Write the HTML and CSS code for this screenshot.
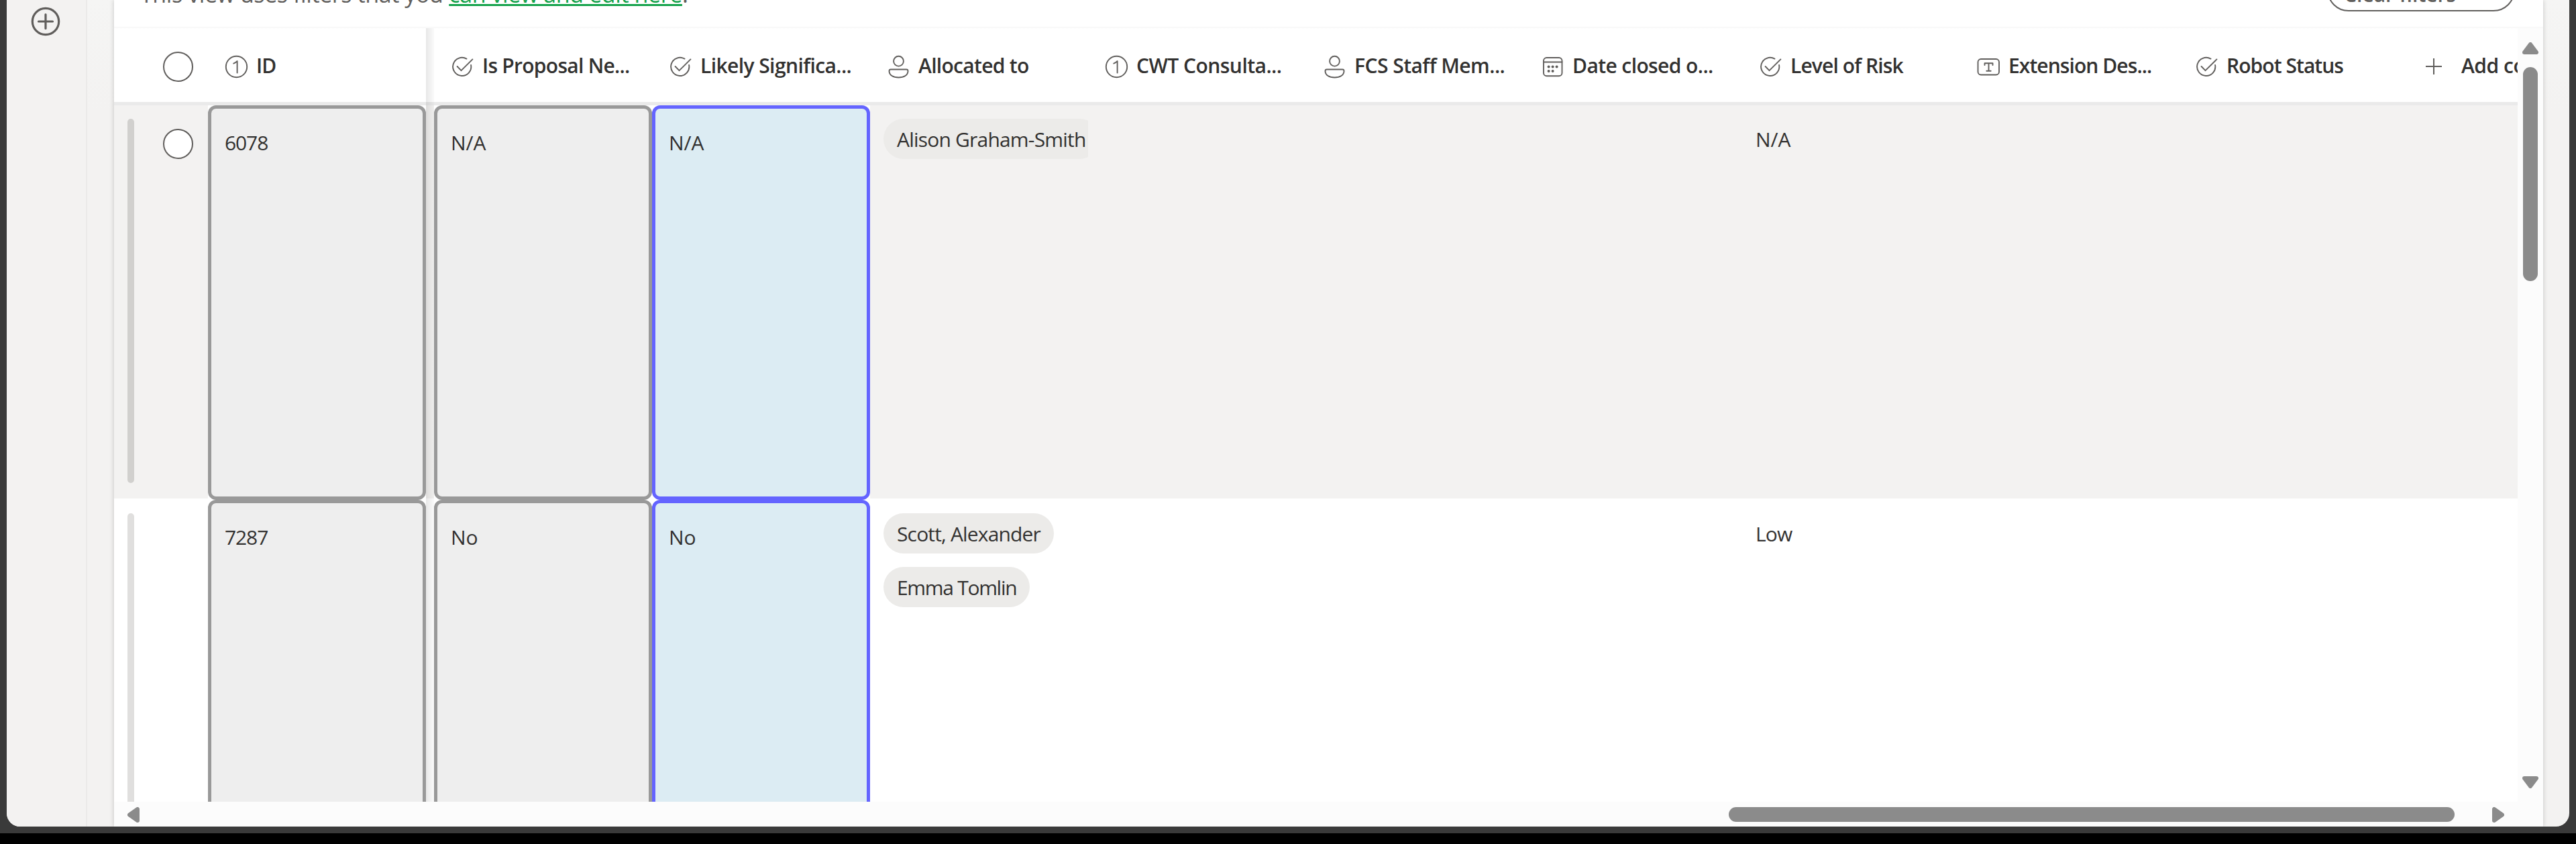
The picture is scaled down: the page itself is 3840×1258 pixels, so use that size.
FILE: index.html
```html
<!DOCTYPE html>
<html lang="en">
<head>
<meta charset="utf-8">
<title>Proposals</title>
<link rel="stylesheet" href="styles.css">
</head>
<body>
<svg class="sprite" width="0" height="0">
  <symbol id="i-check" viewBox="0 0 35 35"><path d="M23.5 5.6A13.6 13.6 0 1 0 30.1 14.9"/><path d="M9.6 17l5.9 6.2L32.4 6.4"/></symbol>
  <symbol id="i-person" viewBox="0 0 35 35"><circle cx="17.5" cy="9.2" r="7.4"/><path d="M5.8 21.5h23.4q2.3 0 2.3 2.4c0 6-6 9.6-14 9.6s-14-3.6-14-9.6q0-2.4 2.3-2.4z"/></symbol>
  <symbol id="i-number" viewBox="0 0 35 35"><circle cx="17.5" cy="17.5" r="15.7"/><path d="M13.2 12.6c2.4-.9 4-2 5.4-3.5V26.5"/></symbol>
  <symbol id="i-date" viewBox="0 0 35 35"><rect x="4" y="4" width="27.5" height="27.2" rx="4.5"/><path d="M4 10.5h27.5"/><g class="dots"><circle cx="11.6" cy="17.6" r="2"/><circle cx="17.6" cy="17.6" r="2"/><circle cx="23.6" cy="17.6" r="2"/><circle cx="11.6" cy="24" r="2"/><circle cx="17.6" cy="24" r="2"/></g></symbol>
  <symbol id="i-text" viewBox="0 0 35 35"><rect x="1.5" y="6" width="31.5" height="23.5" rx="4.5"/><path d="M11.5 15v-2.8h12V15M17.5 12.2v11.5M14.3 23.7h6.4"/></symbol>
</svg>

<div class="window">
  <nav class="rail">
    <svg class="add-app" viewBox="0 0 44 44"><circle cx="22" cy="22" r="19.7"/><path d="M22 11.5v21M11.5 22h21"/></svg>
  </nav>
  <main class="panel">
    <div class="notice">
      <p class="message"><span class="lead">This view uses filters that you</span> <a class="link">can view and edit here</a>.</p>
      <button class="clear">Clear filters</button>
    </div>

    <div class="grid-area">
      <section class="grid">
        <header class="head">
          <div class="pick"><span class="radio"></span></div>
          <div class="col pinned"><svg class="icon"><use href="#i-number"/></svg><span class="t-id">ID</span></div>
          <div class="col"><svg class="icon"><use href="#i-check"/></svg><span class="t-proposal">Is Proposal Ne...</span></div>
          <div class="col"><svg class="icon"><use href="#i-check"/></svg><span class="t-likely">Likely Significa...</span></div>
          <div class="col"><svg class="icon"><use href="#i-person"/></svg><span class="t-alloc">Allocated to</span></div>
          <div class="col"><svg class="icon"><use href="#i-number"/></svg><span class="t-cwt">CWT Consulta...</span></div>
          <div class="col"><svg class="icon"><use href="#i-person"/></svg><span class="t-fcs">FCS Staff Mem...</span></div>
          <div class="col"><svg class="icon"><use href="#i-date"/></svg><span class="t-date">Date closed o...</span></div>
          <div class="col"><svg class="icon"><use href="#i-check"/></svg><span class="t-risk">Level of Risk</span></div>
          <div class="col"><svg class="icon"><use href="#i-text"/></svg><span class="t-ext">Extension Des...</span></div>
          <div class="col"><svg class="icon"><use href="#i-check"/></svg><span class="t-robot">Robot Status</span></div>
          <div class="col add"><svg class="plus" viewBox="0 0 24 24"><path d="M12 0v24M0 12h24"/></svg><span class="t-add">Add column</span></div>
        </header>

        <div class="row selected">
          <div class="pick"><i class="bar"></i><span class="radio"></span></div>
          <div class="frame pinned"><div class="cell num">6078</div></div>
          <div class="frame"><div class="cell">N/A</div></div>
          <div class="frame"><div class="cell active">N/A</div></div>
          <div class="plain"><span class="pill t-alison">Alison Graham-Smith</span></div>
          <div class="plain"></div>
          <div class="plain"></div>
          <div class="plain"></div>
          <div class="plain value">N/A</div>
        </div>

        <div class="row">
          <div class="pick"><i class="bar"></i></div>
          <div class="frame pinned"><div class="cell num">7287</div></div>
          <div class="frame"><div class="cell">No</div></div>
          <div class="frame"><div class="cell active">No</div></div>
          <div class="plain"><span class="pill t-scott">Scott, Alexander</span><span class="pill t-emma">Emma Tomlin</span></div>
          <div class="plain"></div>
          <div class="plain"></div>
          <div class="plain"></div>
          <div class="plain value t-low">Low</div>
        </div>
        <div class="pin-shadow"></div>
      </section>

      <aside class="vscroll">
        <svg class="arrow-v" viewBox="0 0 24 18"><path d="M12 3L21 15H3z"/></svg>
        <div class="vthumb"></div>
        <svg class="arrow-v" viewBox="0 0 24 18"><path d="M12 15L21 3H3z"/></svg>
      </aside>
    </div>

    <footer class="hscroll">
      <svg class="arrow-h" viewBox="0 0 18 23"><path d="M3 11.5L15 3v17z"/></svg>
      <div class="hthumb"></div>
      <svg class="arrow-h" viewBox="0 0 18 23"><path d="M15 11.5L3 3v17z"/></svg>
    </footer>
  </main>
</div>
</body>
</html>
```
FILE: styles.css
```css
* { box-sizing: border-box; }

body {
  margin: 0;
  width: 3840px;
  height: 1258px;
  overflow: hidden;
  background: #000;
  font: 400 30px/40px "Open Sans", "Noto Sans", sans-serif;
  color: #323130;
}

.sprite { display: block; height: 0; }

.window {
  position: relative;
  isolation: isolate;
  display: flex;
  height: 1242px;
  padding: 0 10px 10px;
  background: #3a3a3a;
}

/* Page background behind the rail and the panel */
.window::before {
  content: "";
  position: absolute;
  z-index: -1;
  inset: 0 10px 10px 10px;
  border-radius: 0 0 20px 20px;
  background: linear-gradient(#f5f5f4, #f3f2f1 165px);
}

.rail {
  width: 120px;
  padding: 10px 0 0 36px;
  background: #f3f2f1;
  border-right: 2px solid #ebeae9;
  border-bottom-left-radius: 20px;
}

.add-app {
  display: block;
  width: 44px;
  height: 44px;
  fill: none;
  stroke: #605e5c;
  stroke-width: 3.2;
  stroke-linecap: round;
}

.panel {
  display: flex;
  flex-direction: column;
  width: 3621px;
  margin-left: 40px;
  background: #fff;
  box-shadow: 0 0 7px rgba(0, 0, 0, .2);
  clip-path: inset(0 -39px 0 -40px);
}

.notice {
  flex: none;
  display: flex;
  justify-content: space-between;
  align-items: flex-start;
  height: 42px;
  padding: 0 42px 0 39px;
  overflow: hidden;
  background: linear-gradient(#fff 39px, #f6f6f6);
}

.message {
  margin: -29px 0 0;
  font-size: 34px;
  line-height: 40px;
  white-space: nowrap;
  color: #605e5c;
}

.lead { letter-spacing: -.41px; }

.link {
  letter-spacing: -.4px;
  color: #13a24a;
  text-decoration: underline;
  text-decoration-thickness: 3px;
  text-underline-offset: 2px;
  text-decoration-skip-ink: none;
}

.clear {
  width: 280px;
  height: 64px;
  margin-top: -47px;
  padding: 17px 0 3px 23px;
  border: 2px solid #605e5c;
  border-radius: 32px;
  background: #fff;
  font: 600 30px/40px "Open Sans", "Noto Sans", sans-serif;
  text-align: left;
  color: #605e5c;
}

.grid-area {
  display: flex;
  height: 1153px;
}

.grid {
  position: relative;
  width: 3583px;
  overflow: hidden;
}

.head, .row { display: flex; width: max-content; }

.head {
  height: 115px;
  min-width: 3583px;
  border-bottom: 5px solid #eaeaea;
  font-weight: 600;
}

.pick {
  flex: none;
  display: flex;
  width: 140px;
  padding-left: 73px;
  align-items: center;
}

.head .pick { padding-top: 5px; }

.radio {
  width: 45px;
  height: 45px;
  border: 2px solid #605e5c;
  border-radius: 50%;
  background: #fff;
}

.col {
  flex: none;
  display: flex;
  align-items: center;
  gap: 12px;
  width: 325px;
  padding-left: 25px;
  white-space: nowrap;
}

.col span { padding-top: 2px; }

.pinned { margin-right: 12px; }

.icon {
  flex: none;
  width: 35px;
  height: 35px;
  margin-top: 5px;
  fill: none;
  stroke: #605e5c;
  stroke-width: 1.9;
  stroke-linecap: round;
  stroke-linejoin: round;
}

.dots { fill: #605e5c; stroke: none; }

.add { gap: 29px; padding-left: 44px; }

.plus {
  width: 24px;
  height: 24px;
  margin-top: 4px;
  stroke: #605e5c;
  stroke-width: 2;
}

/* Spacing of each label */
.t-id { letter-spacing: -.9px; }
.t-proposal { letter-spacing: -.73px; }
.t-likely { letter-spacing: -.59px; }
.t-alloc { letter-spacing: -.7px; }
.t-cwt { letter-spacing: -.53px; }
.t-fcs { letter-spacing: -.53px; }
.t-date { letter-spacing: -.6px; }
.t-risk { letter-spacing: -.88px; }
.t-ext { letter-spacing: -.93px; }
.t-robot { letter-spacing: -.95px; }
.t-add { letter-spacing: -.5px; }
.t-alison { letter-spacing: -.8px; }
.t-scott { letter-spacing: -.84px; }
.t-emma { letter-spacing: -1.3px; }
.t-low { letter-spacing: -.8px; }
.num { letter-spacing: -1.1px; }

.row {
  height: 588px;
  min-width: 3583px;
}

.selected { background: linear-gradient(#f3f2f1 586px, #fff 586px); }

.row .pick {
  align-items: flex-start;
  gap: 43px;
  padding: 20px 0 0 20px;
}

.row .radio { margin-top: 15px; }

.bar {
  width: 10px;
  height: 543px;
  border-radius: 5px;
  background: #e0dfde;
}

.selected .bar { background: #d1d0ce; }

.frame {
  flex: none;
  width: 325px;
  background: #fff;
}

.cell {
  height: 588px;
  padding: 31px 20px;
  border: 5px solid #999;
  border-radius: 12px;
  background: #eee;
}

.active {
  border-color: #6464ff;
  background: #dcecf3;
}

.plain {
  flex: none;
  display: flex;
  flex-direction: column;
  align-items: flex-start;
  gap: 20px;
  width: 325px;
  padding: 20px 0 0 20px;
  overflow: hidden;
}

.value { padding-top: 31px; }

.pill {
  padding: 2px 20px 0;
  border-radius: 30px;
  background: #ecebe9;
  line-height: 58px;
  white-space: nowrap;
}

/* Depth cue along the edge of the pinned column, drawn over every row */
.pin-shadow {
  position: absolute;
  top: 0;
  left: 465px;
  width: 12px;
  height: 1153px;
  background: linear-gradient(90deg, rgba(0, 0, 0, .09), rgba(0, 0, 0, .02));
}

.vscroll {
  display: flex;
  flex-direction: column;
  width: 38px;
  padding: 21px 0 20px 7px;
  background: #fcfcfc;
}

.arrow-v { width: 24px; height: 18px; }
.arrow-h { width: 18px; height: 23px; }

.arrow-v, .arrow-h {
  flex: none;
  fill: #8b8b8b;
  stroke: #8b8b8b;
  stroke-width: 6;
  stroke-linejoin: round;
}

.vthumb {
  width: 22px;
  height: 319px;
  margin: 19px 0 auto 1px;
  border-radius: 11px;
  background: #8b8b8b;
}

.hscroll {
  display: flex;
  height: 37px;
  padding: 8px 58px 0 20px;
  background: #fcfcfc;
}

.hthumb {
  width: 1082px;
  height: 22px;
  margin: 0 56px 0 auto;
  border-radius: 11px;
  background: #8b8b8b;
}
```
